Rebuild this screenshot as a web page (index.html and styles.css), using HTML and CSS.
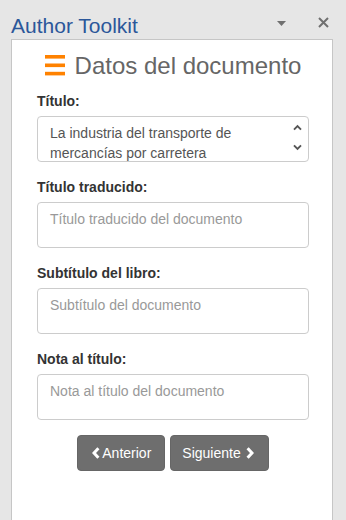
FILE: index.html
```html
<!DOCTYPE html>
<html lang="es">
<head>
<meta charset="utf-8">
<title>Author Toolkit</title>
<link rel="stylesheet" href="styles.css">
</head>
<body>
<header class="pane-header">
  <h1 class="pane-title">Author Toolkit</h1>
  <div class="pane-controls">
    <svg class="ctl-menu" width="9" height="5" viewBox="0 0 9 5"><path d="M0 0H9L4.5 5Z" fill="#707070"/></svg>
    <svg class="ctl-close" width="11" height="11" viewBox="0 0 11 11"><path d="M1 1L10 10M10 1L1 10" stroke="#707070" stroke-width="2"/></svg>
  </div>
</header>
<main class="panel">
  <h2 class="section-title">
    <svg class="burger" width="20" height="21" viewBox="0 0 20 21"><rect x="0" y="0" width="20" height="3.6" fill="#ff8200"/><rect x="0" y="8.5" width="20" height="3.6" fill="#ff8200"/><rect x="0" y="16.8" width="20" height="3.6" fill="#ff8200"/></svg>
    <span>Datos del documento</span>
  </h2>
  <form class="doc-form">
    <div class="form-group">
      <label class="form-label" for="t1">Título:</label>
      <div class="field-wrap">
        <textarea id="t1" class="form-control">La industria del transporte de mercancías por carretera</textarea>
        <div class="scroll-arrows">
          <svg width="9" height="7" viewBox="0 0 9 7"><path d="M1 5.6L4.5 2L8 5.6" fill="none" stroke="#555" stroke-width="1.9"/></svg>
          <svg width="9" height="7" viewBox="0 0 9 7"><path d="M1 1.4L4.5 5L8 1.4" fill="none" stroke="#555" stroke-width="1.9"/></svg>
        </div>
      </div>
    </div>
    <div class="form-group">
      <label class="form-label" for="t2">Título traducido:</label>
      <textarea id="t2" class="form-control" placeholder="Título traducido del documento"></textarea>
    </div>
    <div class="form-group">
      <label class="form-label" for="t3">Subtítulo del libro:</label>
      <textarea id="t3" class="form-control" placeholder="Subtítulo del documento"></textarea>
    </div>
    <div class="form-group">
      <label class="form-label" for="t4">Nota al título:</label>
      <textarea id="t4" class="form-control" placeholder="Nota al título del documento"></textarea>
    </div>
    <div class="nav-buttons">
      <button type="button" class="btn btn-prev">
        <svg width="8" height="12" viewBox="0 0 8 12"><path d="M6.4 1.2L2 6L6.4 10.8" fill="none" stroke="#fff" stroke-width="3"/></svg>
        <span>Anterior</span>
      </button>
      <button type="button" class="btn btn-next">
        <span>Siguiente</span>
        <svg width="8" height="12" viewBox="0 0 8 12"><path d="M1.6 1.2L6 6L1.6 10.8" fill="none" stroke="#fff" stroke-width="3"/></svg>
      </button>
    </div>
  </form>
</main>
</body>
</html>
```

FILE: styles.css
```css
* { box-sizing: border-box; }

html, body {
  margin: 0;
  padding: 0;
  height: 100%;
}

body {
  background: #e6e6e6;
  font-family: "Liberation Sans", Arial, sans-serif;
  font-size: 14px;
  line-height: 20px;
  color: #333;
  display: flex;
  flex-direction: column;
  overflow: hidden;
}

.pane-header {
  height: 39px;
  padding: 14px 17px 0 11px;
  display: flex;
  align-items: flex-start;
  flex: none;
}

.pane-title {
  margin: 0;
  font-size: 21px;
  line-height: 24px;
  font-weight: normal;
  color: #2b579a;
}

.pane-controls {
  margin-left: auto;
  display: flex;
  align-items: center;
  gap: 32px;
  padding-top: 3px;
}

.ctl-menu { margin-top: 1px; }

.panel {
  flex: 1;
  margin: 0 13px 0 11px;
  background: #fff;
  border: 1px solid #c6c6c6;
  border-bottom: none;
  padding: 12px 23px 0 25px;
}

.section-title {
  margin: 0 0 11px;
  display: flex;
  justify-content: center;
  align-items: center;
  gap: 10px;
  font-size: 24px;
  line-height: 28px;
  font-weight: normal;
  color: #666;
}

.burger { margin-top: -1px; }

.doc-form { margin: 0; }

.form-group { margin-bottom: 15px; }

.form-label {
  display: block;
  margin-bottom: 5px;
  font-weight: bold;
  color: #333;
}

.field-wrap { position: relative; }

.form-control {
  display: block;
  width: 100%;
  height: 46px;
  padding: 6px 12px;
  border: 1px solid #ccc;
  border-radius: 4px;
  font: inherit;
  font-size: 14px;
  line-height: 20px;
  color: #555;
  background: #fff;
  resize: none;
  overflow: hidden;
  margin: 0;
}

.form-control::placeholder { color: #999; }

.scroll-arrows {
  position: absolute;
  top: 8px;
  right: 7px;
  display: flex;
  flex-direction: column;
  gap: 13px;
}

.scroll-arrows svg { display: block; }

.nav-buttons {
  display: flex;
  justify-content: center;
  gap: 5px;
}

.btn {
  display: inline-flex;
  align-items: center;
  height: 36px;
  border: 1px solid #666;
  border-radius: 4px;
  background: #6e6e6e;
  color: #fff;
  font-family: "Liberation Sans", Arial, sans-serif;
  font-size: 14px;
  line-height: 20px;
  cursor: pointer;
}

.btn-prev {
  padding: 0 13px 0 14px;
  gap: 2px;
}

.btn-next {
  padding: 0 14px 0 11px;
  gap: 5px;
}
```
